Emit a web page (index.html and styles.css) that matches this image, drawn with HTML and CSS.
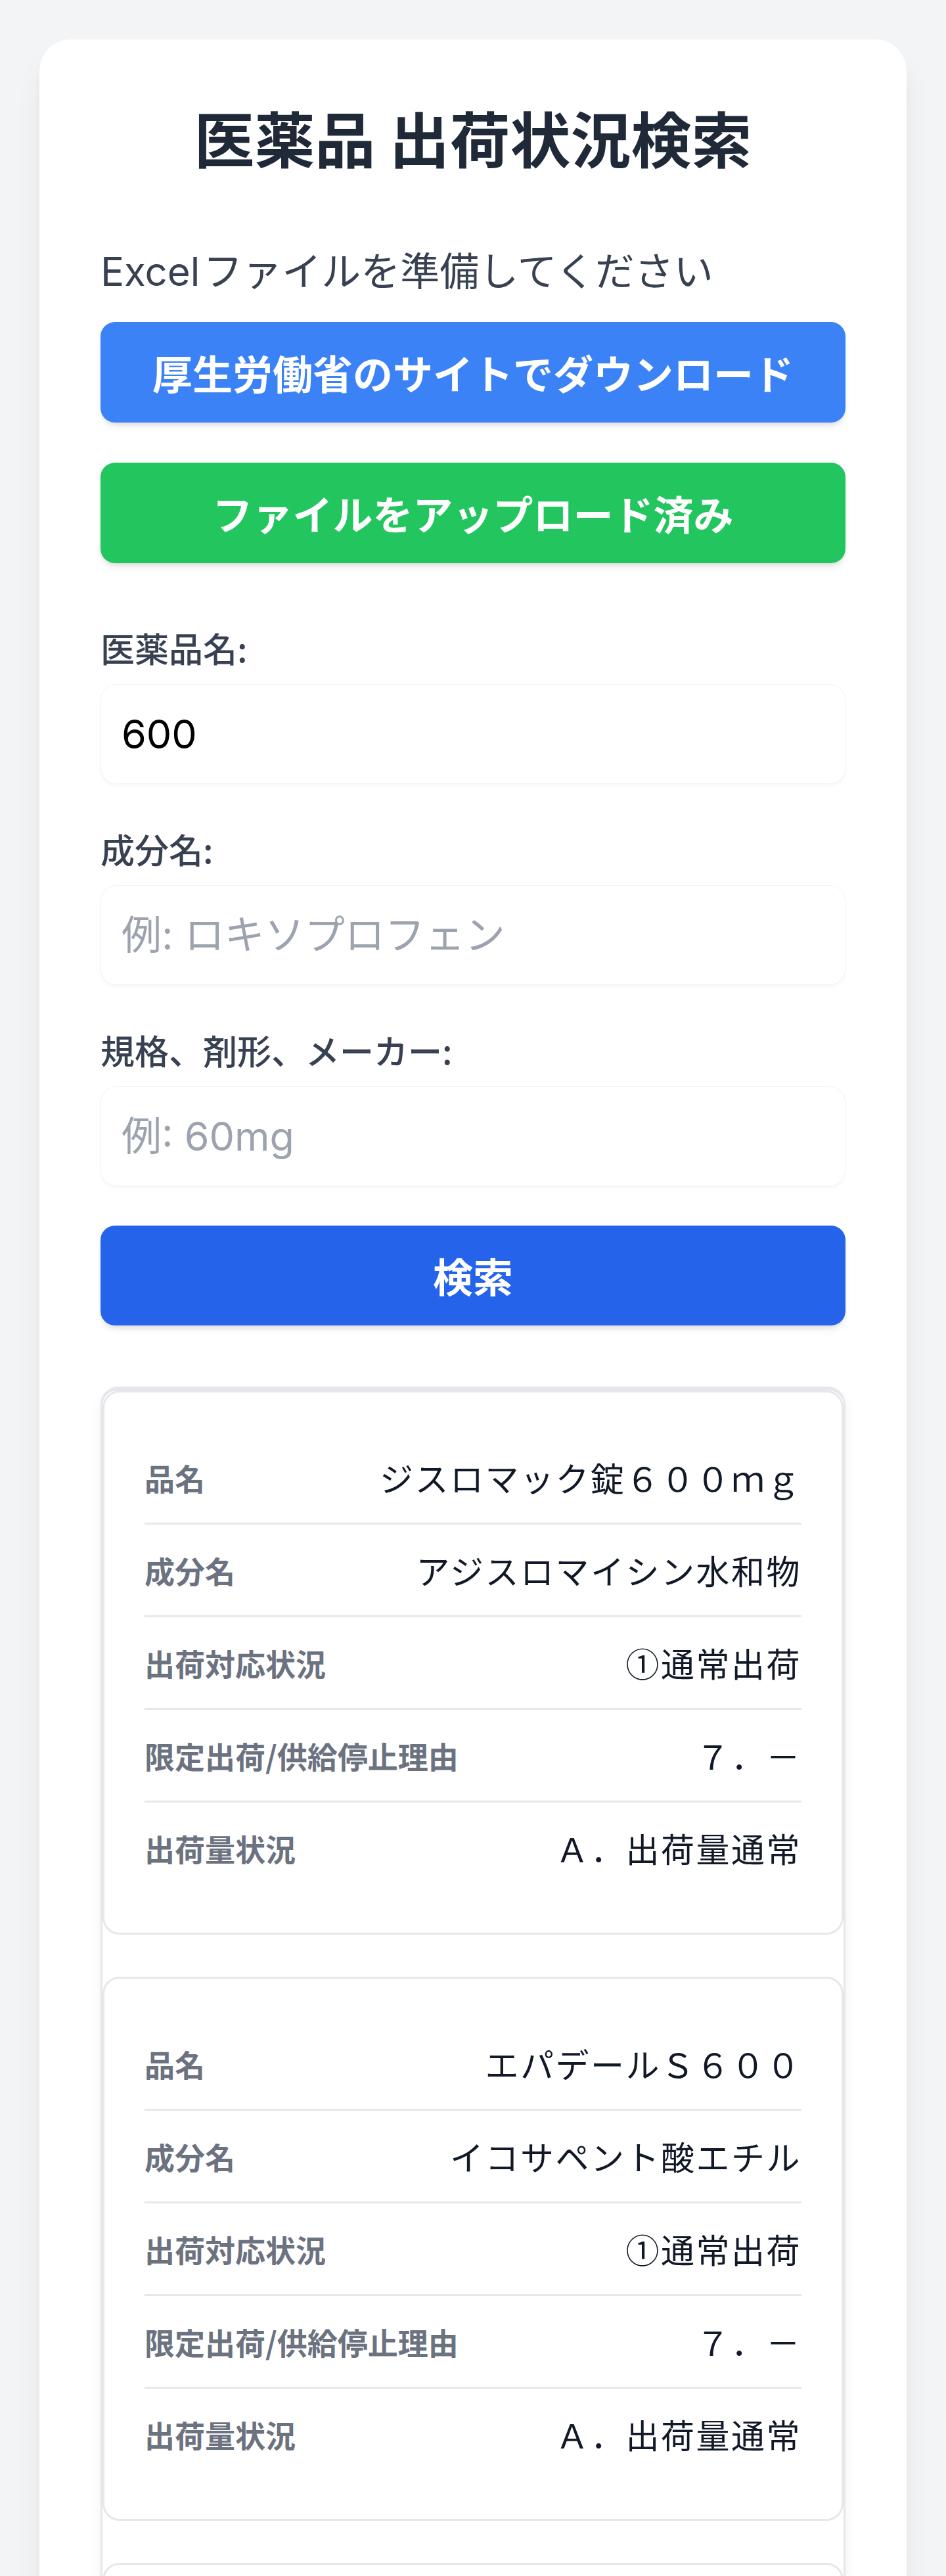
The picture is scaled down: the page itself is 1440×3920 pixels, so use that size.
FILE: index.html
```html
<!DOCTYPE html>
<html lang="ja">
<head>
    <meta charset="UTF-8">
    <meta name="viewport" content="width=device-width, initial-scale=1.0">
    <title>医薬品 出荷状況検索</title>
    <link rel="stylesheet" href="styles.css">
</head>
<body>
<div class="container">
    <h1 class="title">医薬品 出荷状況検索</h1>

    <p class="lead"><span class="latin">Excel</span>ファイルを準備してください</p>
    <a class="btn btn-download" href="#">厚生労働省のサイトでダウンロード</a>
    <button type="button" class="btn btn-upload">ファイルをアップロード済み</button>

    <form class="search-form" onsubmit="return false">
        <div class="field">
            <label for="drug">医薬品名:</label>
            <input type="text" id="drug" name="drug" value="600">
        </div>
        <div class="field">
            <label for="ingredient">成分名:</label>
            <input type="text" id="ingredient" name="ingredient" placeholder="例: ロキソプロフェン">
        </div>
        <div class="field">
            <label for="spec">規格、剤形、メーカー:</label>
            <input type="text" id="spec" name="spec" placeholder="例: 60mg">
        </div>
        <button type="submit" class="btn btn-search">検索</button>
    </form>

    <div class="results">
        <div class="result-card">
            <div class="row"><span class="row-label">品名</span><span class="row-value">ジスロマック錠６００ｍｇ</span></div>
            <div class="row"><span class="row-label">成分名</span><span class="row-value">アジスロマイシン水和物</span></div>
            <div class="row"><span class="row-label">出荷対応状況</span><span class="row-value">①通常出荷</span></div>
            <div class="row"><span class="row-label">限定出荷/供給停止理由</span><span class="row-value">７．－</span></div>
            <div class="row"><span class="row-label">出荷量状況</span><span class="row-value">Ａ．出荷量通常</span></div>
        </div>

        <div class="result-card">
            <div class="row"><span class="row-label">品名</span><span class="row-value">エパデールＳ６００</span></div>
            <div class="row"><span class="row-label">成分名</span><span class="row-value">イコサペント酸エチル</span></div>
            <div class="row"><span class="row-label">出荷対応状況</span><span class="row-value">①通常出荷</span></div>
            <div class="row"><span class="row-label">限定出荷/供給停止理由</span><span class="row-value">７．－</span></div>
            <div class="row"><span class="row-label">出荷量状況</span><span class="row-value">Ａ．出荷量通常</span></div>
        </div>

        <div class="result-card">
            <div class="row"><span class="row-label">品名</span><span class="row-value">ビソルボン錠４ｍｇ</span></div>
            <div class="row"><span class="row-label">成分名</span><span class="row-value">ブロムヘキシン塩酸塩</span></div>
            <div class="row"><span class="row-label">出荷対応状況</span><span class="row-value">①通常出荷</span></div>
            <div class="row"><span class="row-label">限定出荷/供給停止理由</span><span class="row-value">７．－</span></div>
            <div class="row"><span class="row-label">出荷量状況</span><span class="row-value">Ａ．出荷量通常</span></div>
        </div>
    </div>
</div>
</body>
</html>
```

FILE: styles.css
```css
body {
    margin: 0;
    padding: 0;
    background-color: #f3f4f6;
    font-family: "Noto Sans CJK JP", sans-serif;
}

.container {
    margin: 60px;
    padding: 94px 93px 93px;
    background-color: #fff;
    border-radius: 48px;
    box-shadow: 0 32px 48px -10px rgba(0, 0, 0, 0.1), 0 13px 20px -12px rgba(0, 0, 0, 0.1);
}

.title {
    margin: 0 0 105px;
    font-size: 92px;
    line-height: 108px;
    font-weight: 700;
    text-align: center;
    color: #1f2937;
}

.lead {
    margin: 0 0 39px;
    height: 84px;
    font-size: 60px;
    line-height: 84px;
    color: #374151;
}

.lead .latin {
    font-family: Inter, "Noto Sans CJK JP", sans-serif;
    line-height: 1;
    margin-right: 5px;
}

.btn {
    display: block;
    width: 100%;
    box-sizing: border-box;
    padding: 36px 0;
    border: none;
    border-radius: 22px;
    font-family: inherit;
    font-size: 61px;
    line-height: 81px;
    font-weight: 700;
    color: #fff;
    text-align: center;
    text-decoration: none;
    cursor: pointer;
    box-shadow: 0 8px 12px -4px rgba(0, 0, 0, 0.12), 0 3px 6px -3px rgba(0, 0, 0, 0.1);
}

.btn-download {
    background-color: #3b82f6;
    margin-bottom: 61px;
}

.btn-upload {
    background-color: #22c55e;
    margin-bottom: 90px;
}

.btn-search {
    background-color: #2563eb;
    padding: 35px 0;
    line-height: 82px;
    margin-bottom: 93px;
}

.field {
    margin-bottom: 60px;
}

.field label {
    display: block;
    margin-bottom: 17px;
    font-size: 52px;
    line-height: 77px;
    font-weight: 500;
    color: #374151;
}

.field input {
    display: block;
    width: 100%;
    height: 152px;
    box-sizing: border-box;
    padding: 0 31px;
    border: 1px solid #f3f4f6;
    border-radius: 24px;
    font-family: Inter, "Noto Sans CJK JP", sans-serif;
    font-size: 61px;
    color: #000;
    background-color: #fff;
    box-shadow: 0 3px 5px rgba(0, 0, 0, 0.035);
    outline: none;
}

.field input::placeholder {
    color: #9ca3af;
}

.results {
    border: 3px solid #e5e7eb;
    border-top-width: 6px;
    border-radius: 27px;
    box-shadow: 0 10px 20px rgba(0, 0, 0, 0.06);
}

.result-card {
    padding: 60px 61px;
    border: 3px solid #e5e7eb;
    border-radius: 26px;
    background-color: #fff;
    margin-bottom: 64px;
}

.row {
    display: flex;
    justify-content: space-between;
    align-items: center;
    padding: 30px 0;
    line-height: 78px;
    border-bottom: 3px solid #e5e7eb;
}

.row:last-child {
    border-bottom: none;
}

.row-label {
    font-size: 46px;
    font-weight: 700;
    color: #6b7280;
}

.row-value {
    font-size: 51px;
    letter-spacing: 2.5px;
    color: #111827;
    text-align: right;
}
```
